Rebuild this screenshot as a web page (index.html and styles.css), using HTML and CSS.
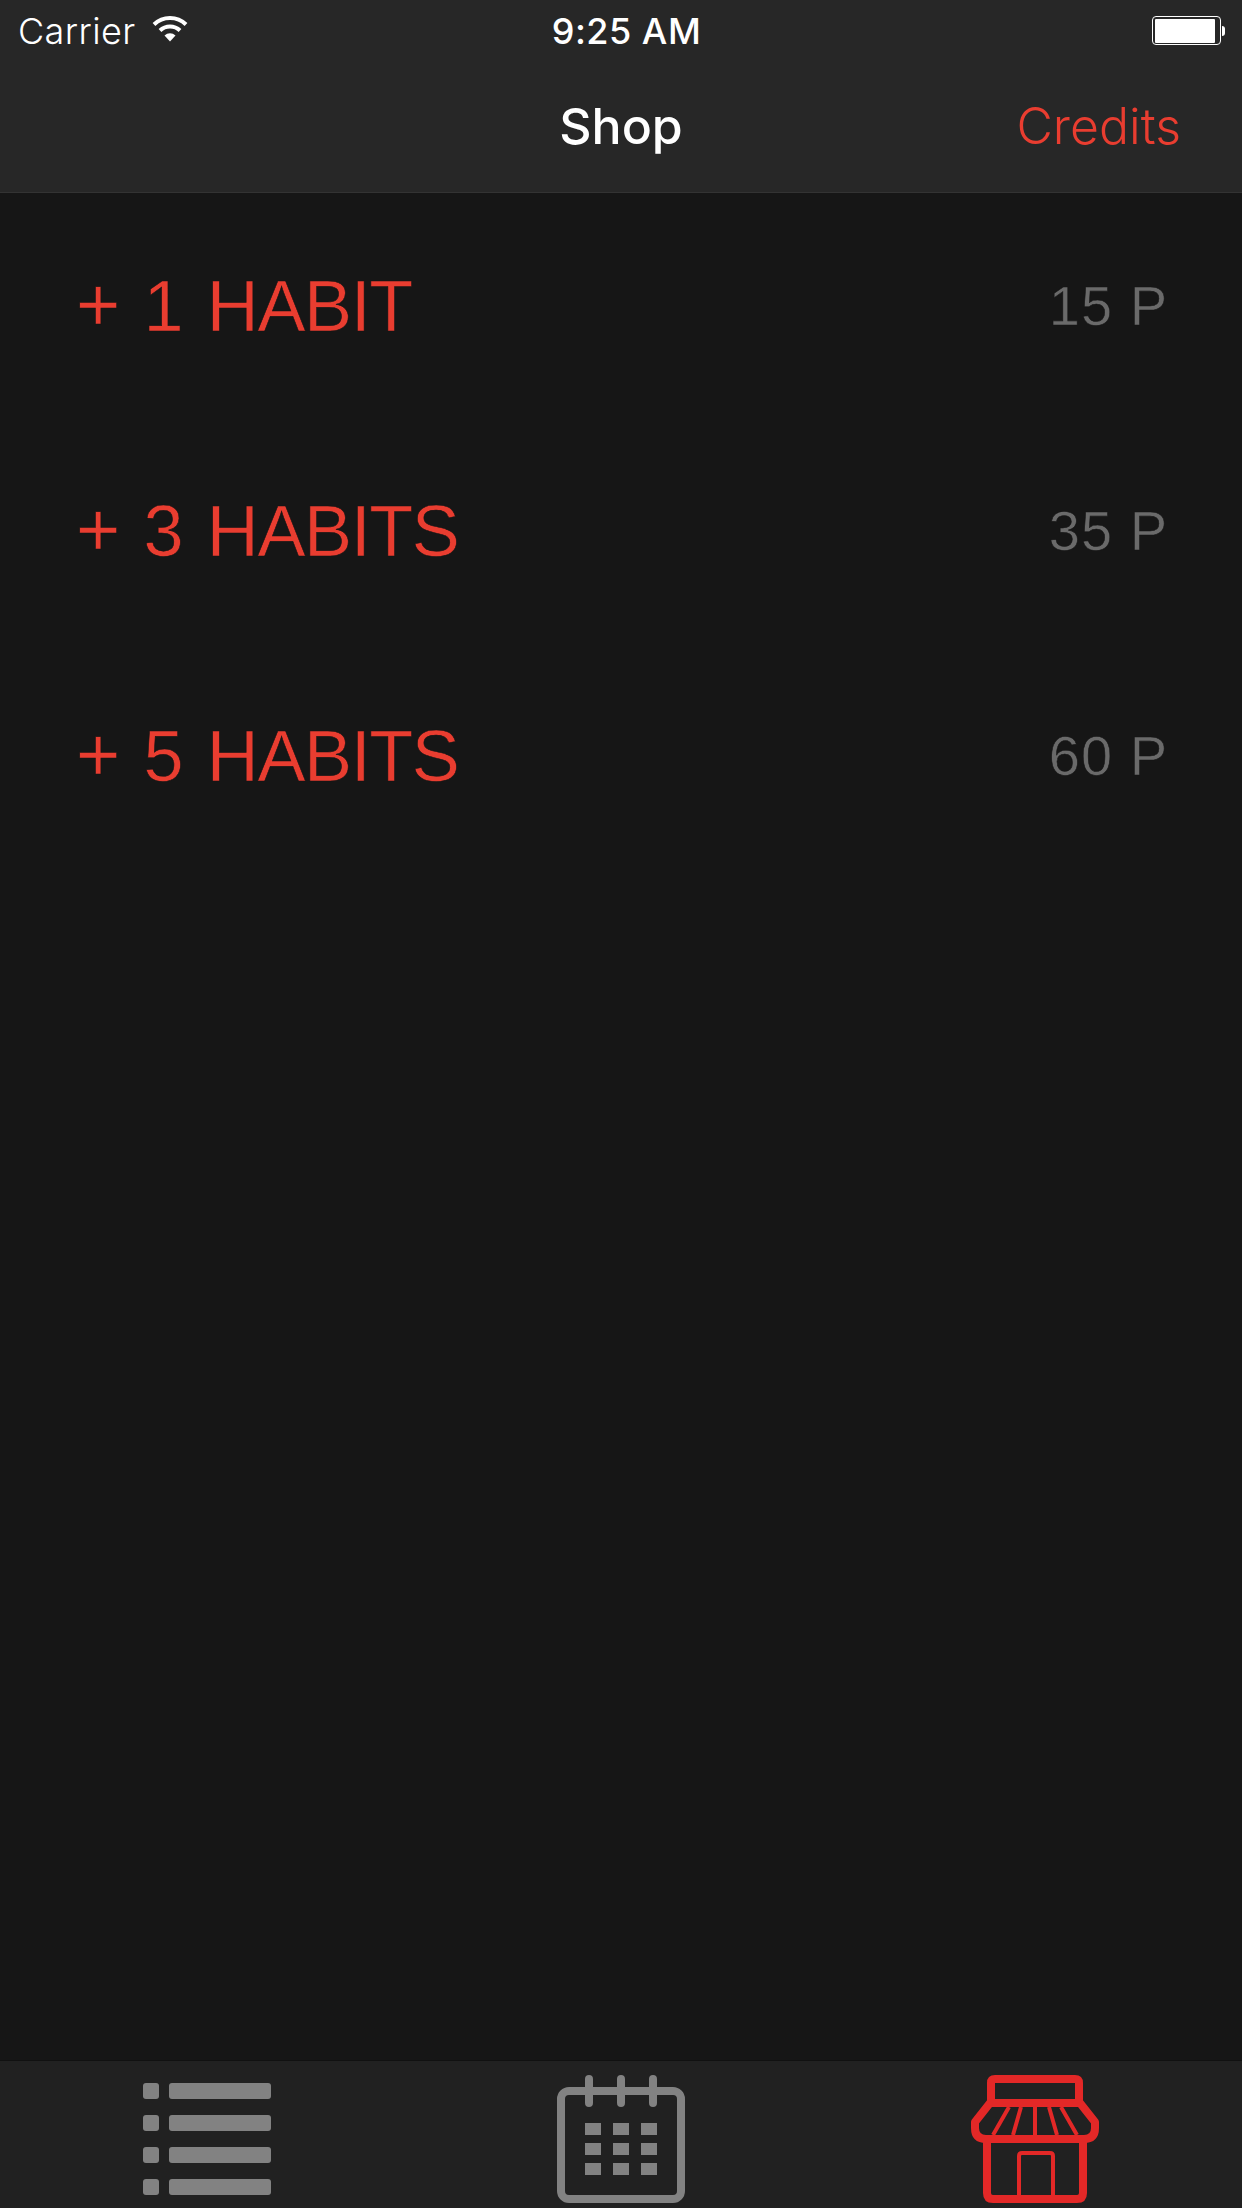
FILE: index.html
```html
<!DOCTYPE html>
<html lang="en">
<head>
    <meta charset="UTF-8">
    <meta name="viewport" content="width=device-width, initial-scale=1.0">
    <title>Shop</title>
    <link rel="stylesheet" href="styles.css">
</head>
<body>
    <div class="screen">
        <header class="top-bar">
            <div class="status-bar">
                <div class="status-left">
                    <span>Carrier</span>
                    <svg class="wifi" width="36" height="28" viewBox="0 0 36 28">
                        <path d="M2 10.5 A23 23 0 0 1 34 10.5" fill="none" stroke="#fff" stroke-width="4"/>
                        <path d="M8 16.5 A14.5 14.5 0 0 1 28 16.5" fill="none" stroke="#fff" stroke-width="4"/>
                        <path d="M12.5 21.5 A8 8 0 0 1 23.5 21.5 L18 27.5 Z" fill="#fff"/>
                    </svg>
                </div>
                <div class="status-time">9:25 AM</div>
                <div class="status-right">
                    <div class="battery"><div class="battery-level"></div></div>
                    <div class="battery-tip"></div>
                </div>
            </div>
            <nav class="nav-bar">
                <div></div>
                <div class="nav-title">Shop</div>
                <div class="nav-action">Credits</div>
            </nav>
        </header>

        <main class="shop-list">
            <div class="shop-row">
                <span class="shop-name"><span class="plus">+</span> 1 HABIT</span>
                <span class="shop-price">15 P</span>
            </div>
            <div class="shop-row">
                <span class="shop-name"><span class="plus">+</span> 3 HABITS</span>
                <span class="shop-price">35 P</span>
            </div>
            <div class="shop-row">
                <span class="shop-name"><span class="plus">+</span> 5 HABITS</span>
                <span class="shop-price">60 P</span>
            </div>
        </main>

        <footer class="tab-bar">
            <div class="tab">
                <svg width="140" height="132" viewBox="0 0 140 132" fill="#828282">
                    <rect x="6" y="8" width="16" height="16" rx="3"/>
                    <rect x="32" y="8" width="102" height="16" rx="3"/>
                    <rect x="6" y="40" width="16" height="16" rx="3"/>
                    <rect x="32" y="40" width="102" height="16" rx="3"/>
                    <rect x="6" y="72" width="16" height="16" rx="3"/>
                    <rect x="32" y="72" width="102" height="16" rx="3"/>
                    <rect x="6" y="104" width="16" height="16" rx="3"/>
                    <rect x="32" y="104" width="102" height="16" rx="3"/>
                </svg>
            </div>
            <div class="tab">
                <svg width="140" height="132" viewBox="0 0 140 132" fill="#828282">
                    <rect x="10" y="16" width="120" height="108" rx="8" fill="none" stroke="#828282" stroke-width="8"/>
                    <path d="M38 4V28M70 4V28M102 4V28" fill="none" stroke="#828282" stroke-width="8" stroke-linecap="round"/>
                    <rect x="34" y="48" width="16" height="12"/>
                    <rect x="62" y="48" width="16" height="12"/>
                    <rect x="90" y="48" width="16" height="12"/>
                    <rect x="34" y="68" width="16" height="12"/>
                    <rect x="62" y="68" width="16" height="12"/>
                    <rect x="90" y="68" width="16" height="12"/>
                    <rect x="34" y="88" width="16" height="12"/>
                    <rect x="62" y="88" width="16" height="12"/>
                    <rect x="90" y="88" width="16" height="12"/>
                </svg>
            </div>
            <div class="tab">
                <svg width="140" height="132" viewBox="0 0 140 132" fill="none" stroke="#e32827" stroke-width="8" stroke-linejoin="round">
                    <path d="M26 28V8Q26 4 30 4H110Q114 4 114 8V28"/>
                    <path d="M25 28H115L130 47V53Q130 64 119 64H21Q10 64 10 53V47Z"/>
                    <path d="M22 64V118Q22 124 28 124H112Q118 124 118 118V64"/>
                    <path d="M54 122V81Q54 78 57 78H85Q88 78 88 81V122" stroke-width="4"/>
                    <path d="M44 32L28 60M56 32L48 60M70 32V60M84 32L92 60M96 32L112 60" stroke-width="4"/>
                </svg>
            </div>
        </footer>
    </div>
</body>
</html>
```

FILE: styles.css
```css
html, body {
    margin: 0;
    padding: 0;
    background-color: #161616;
}
.screen {
    width: 1242px;
    height: 2208px;
    display: flex;
    flex-direction: column;
    overflow: hidden;
    font-family: Inter, sans-serif;
}
.top-bar {
    background-color: #272727;
    border-bottom: 1px solid #333;
}
.status-bar {
    height: 60px;
    display: grid;
    grid-template-columns: 1fr auto 1fr;
    align-items: center;
    padding: 2px 17px 0 18px;
    box-sizing: border-box;
    color: white;
    font-size: 36px;
}
.status-left {
    display: flex;
    align-items: center;
    gap: 16px;
    font-weight: 300;
    letter-spacing: 0.4px;
}
.wifi {
    margin-top: -6px;
}
.status-time {
    margin-left: 10px;
    font-weight: 450;
    letter-spacing: 0.5px;
}
.status-right {
    display: flex;
    justify-content: flex-end;
    align-items: center;
    margin-top: -1px;
}
.battery {
    width: 69px;
    height: 29px;
    box-sizing: border-box;
    border: 1.5px solid white;
    border-radius: 4px;
    padding: 1.5px;
    display: flex;
}
.battery-level {
    width: 60px;
    background-color: white;
    border-radius: 1px;
}
.battery-tip {
    width: 3px;
    height: 10px;
    margin-left: 1px;
    background-color: white;
    border-radius: 0 3px 3px 0;
}
.nav-bar {
    height: 132px;
    display: grid;
    grid-template-columns: 1fr auto 1fr;
    align-items: center;
    padding: 0 61px;
    font-size: 50px;
}
.nav-title {
    color: white;
    font-weight: 500;
}
.nav-action {
    justify-self: end;
    color: #e93d30;
    font-weight: 300;
}
.shop-list {
    flex: 1;
}
.shop-row {
    height: 225px;
    display: flex;
    justify-content: space-between;
    align-items: center;
    padding: 0 74px 0 76px;
    font-family: "Liberation Sans", Arial, sans-serif;
    -webkit-text-stroke: 0.6px #161616;
}
.shop-name {
    color: #e93d30;
    font-size: 72px;
    line-height: 82px;
    letter-spacing: -1.4px;
    word-spacing: 6px;
}
.plus {
    font-size: 76px;
    line-height: 0;
}
.shop-price {
    color: #6a6a6a;
    font-size: 56px;
    letter-spacing: 1px;
}
.tab-bar {
    height: 148px;
    box-sizing: border-box;
    border-top: 1px solid #111;
    background-color: #212121;
    display: grid;
    grid-template-columns: repeat(3, 1fr);
    padding-top: 14px;
}
.tab {
    display: flex;
    justify-content: center;
}
```
